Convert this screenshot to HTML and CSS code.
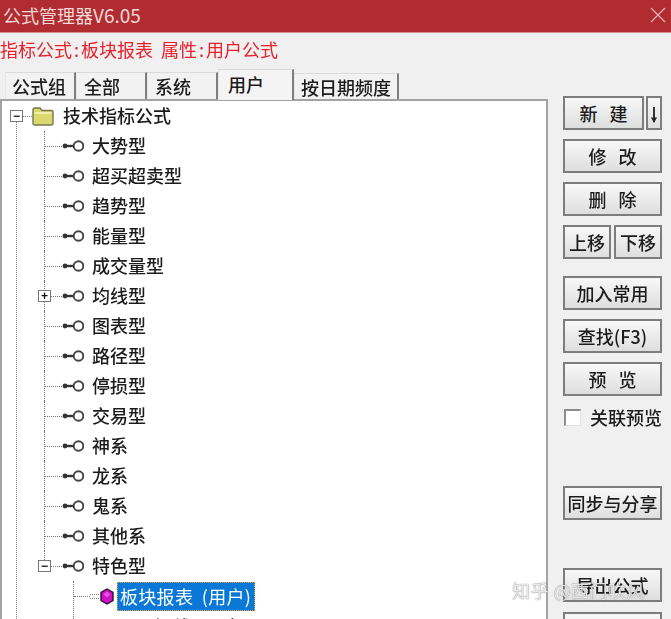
FILE: index.html
```html
<!DOCTYPE html>
<html lang="zh-CN">
<head>
<meta charset="utf-8">
<title>公式管理器V6.05</title>
<link rel="stylesheet" href="styles.css">
</head>
<body>
<svg class="defs" width="0" height="0" aria-hidden="true">
  <defs>
    <g id="key">
      <circle cx="3" cy="6" r="2.4" fill="#333"/>
      <path d="M3 6H12" stroke="#333" stroke-width="2.4" fill="none"/>
      <circle cx="16.5" cy="6" r="4.8" stroke="#444" stroke-width="1.9" fill="#fff"/>
    </g>
  </defs>
</svg>
<div class="window">
  <header class="titlebar">
    <span class="title">公式管理器<span class="ver">V6.05</span></span>
    <svg class="close" width="16" height="16" viewBox="0 0 16 16"><path d="M1 1L15 15M15 1L1 15" stroke="#e9b4b4" stroke-width="1.2" fill="none"/></svg>
  </header>
  <div class="info">指标公式<span class="colon">:</span>板块报表&nbsp; 属性<span class="colon">:</span>用户公式</div>
  <div class="main">
    <section class="left">
      <nav class="tabs">
        <span class="tab tab-a">公式组</span>
        <span class="tab tab-b">全部</span>
        <span class="tab tab-c">系统</span>
        <span class="tab tab-active">用户</span>
        <span class="tab tab-d">按日期频度</span>
      </nav>
      <div class="tree">
        <div class="root-row">
          <span class="box">−</span>
          <span class="dash dash-root"></span>
          <svg class="folder" width="22" height="19" viewBox="0 0 22 19">
            <path d="M1 3Q1 1 3 1H8L10 3.5H19.5Q21 3.5 21 5V16Q21 18 19 18H3Q1 18 1 16Z" fill="#dcd870" stroke="#77754a" stroke-width="1.4"/>
            <path d="M2.5 6H19.5" stroke="#f8f5b8" stroke-width="1.6"/>
          </svg>
          <span class="label root-label">技术指标公式</span>
        </div>
        <div class="guide-outer">
          <ul class="branches">
            <li class="node"><div class="row"><span class="dash"></span><svg class="key" width="22" height="12" viewBox="0 0 22 12"><use href="#key"/></svg><span class="label">大势型</span></div></li>
            <li class="node"><div class="row"><span class="dash"></span><svg class="key" width="22" height="12" viewBox="0 0 22 12"><use href="#key"/></svg><span class="label">超买超卖型</span></div></li>
            <li class="node"><div class="row"><span class="dash"></span><svg class="key" width="22" height="12" viewBox="0 0 22 12"><use href="#key"/></svg><span class="label">趋势型</span></div></li>
            <li class="node"><div class="row"><span class="dash"></span><svg class="key" width="22" height="12" viewBox="0 0 22 12"><use href="#key"/></svg><span class="label">能量型</span></div></li>
            <li class="node"><div class="row"><span class="dash"></span><svg class="key" width="22" height="12" viewBox="0 0 22 12"><use href="#key"/></svg><span class="label">成交量型</span></div></li>
            <li class="node"><div class="row"><span class="box box-over">+</span><span class="dash"></span><svg class="key" width="22" height="12" viewBox="0 0 22 12"><use href="#key"/></svg><span class="label">均线型</span></div></li>
            <li class="node"><div class="row"><span class="dash"></span><svg class="key" width="22" height="12" viewBox="0 0 22 12"><use href="#key"/></svg><span class="label">图表型</span></div></li>
            <li class="node"><div class="row"><span class="dash"></span><svg class="key" width="22" height="12" viewBox="0 0 22 12"><use href="#key"/></svg><span class="label">路径型</span></div></li>
            <li class="node"><div class="row"><span class="dash"></span><svg class="key" width="22" height="12" viewBox="0 0 22 12"><use href="#key"/></svg><span class="label">停损型</span></div></li>
            <li class="node"><div class="row"><span class="dash"></span><svg class="key" width="22" height="12" viewBox="0 0 22 12"><use href="#key"/></svg><span class="label">交易型</span></div></li>
            <li class="node"><div class="row"><span class="dash"></span><svg class="key" width="22" height="12" viewBox="0 0 22 12"><use href="#key"/></svg><span class="label">神系</span></div></li>
            <li class="node"><div class="row"><span class="dash"></span><svg class="key" width="22" height="12" viewBox="0 0 22 12"><use href="#key"/></svg><span class="label">龙系</span></div></li>
            <li class="node"><div class="row"><span class="dash"></span><svg class="key" width="22" height="12" viewBox="0 0 22 12"><use href="#key"/></svg><span class="label">鬼系</span></div></li>
            <li class="node"><div class="row"><span class="dash"></span><svg class="key" width="22" height="12" viewBox="0 0 22 12"><use href="#key"/></svg><span class="label">其他系</span></div></li>
            <li class="node node-last">
              <div class="row"><span class="box box-over">−</span><span class="dash"></span><svg class="key" width="22" height="12" viewBox="0 0 22 12"><use href="#key"/></svg><span class="label">特色型</span></div>
              <ul class="leaves">
                <li class="leaf">
                  <span class="dash dash-leaf"></span>
                  <span class="stub"></span>
                  <svg class="gem" width="14" height="17" viewBox="0 0 14 17"><path d="M7 1L13 4.5V12.5L7 16L1 12.5V4.5Z" fill="#cc10c4" stroke="#2a1030" stroke-width="1.4"/><path d="M7 3.5L10.5 6.5L7 9.5L3.5 6.5Z" fill="#ee50e4"/></svg>
                  <span class="selected">板块报表&nbsp;&nbsp;(用户)</span>
                </li>
                <li class="leaf leaf-next"><span class="label label-next">短线&nbsp;&nbsp;(用户)</span></li>
              </ul>
            </li>
          </ul>
        </div>
      </div>
    </section>
    <aside class="actions">
      <div class="btn-pair">
        <button class="btn btn-grow wide-text">新 建</button>
        <button class="btn btn-arrow"><svg class="arrow" width="8" height="18" viewBox="0 0 8 18"><path d="M4 1V16" stroke="#222" stroke-width="1.8" fill="none"/><path d="M1 11.5L4 17L7 11.5" fill="#222"/></svg></button>
      </div>
      <button class="btn wide-text">修 改</button>
      <button class="btn wide-text">删 除</button>
      <div class="btn-pair btn-pair-move">
        <button class="btn btn-half">上移</button>
        <button class="btn btn-half">下移</button>
      </div>
      <button class="btn">加入常用</button>
      <button class="btn">查找(F3)</button>
      <button class="btn wide-text">预 览</button>
      <label class="check"><span class="checkbox"></span><span>关联预览</span></label>
      <button class="btn btn-share">同步与分享</button>
      <button class="btn btn-export">导出公式</button>
      <button class="btn"></button>
    </aside>
  </div>
  <div class="watermark">知乎 @西门吹风</div>
</div>
</body>
</html>
```

FILE: styles.css
```css
* { box-sizing: border-box; }
html, body { margin: 0; padding: 0; }
body {
  width: 671px;
  height: 619px;
  overflow: hidden;
  background: #f0f0f0;
  font-family: "Noto Sans CJK SC", "Noto Sans", sans-serif;
  color: #1c1c1c;
}
.defs { position: absolute; }
.window {
  position: relative;
  width: 671px;
  height: 619px;
  overflow: hidden;
  filter: blur(0.35px);
}

.titlebar {
  height: 33px;
  background: #b02c30;
  border-bottom: 1px solid #d88f90;
  display: flex;
  align-items: center;
  justify-content: space-between;
  padding: 0 5px 2px 3px;
}
.title { color: #f2d9d9; font-size: 18px; line-height: 30px; }
.ver { font-size: 19px; }

.info {
  height: 36px;
  padding-left: 0;
  color: #e8202c;
  font-size: 18px;
  line-height: 32px;
  white-space: nowrap;
}
.colon { margin: 0 2px; }

.main { display: flex; height: 550px; }
.left { width: 548px; flex: none; }

.tabs {
  height: 30px;
  display: flex;
  align-items: flex-end;
  padding-left: 5px;
  font-weight: 500;
}
.tab {
  height: 27px;
  background: #f2f2f2;
  border-top: 1px solid #dcdcdc;
  border-left: 1px solid #e8e8e8;
  border-right: 2px solid #7e7e7e;
  font-size: 18px;
  line-height: 26px;
  white-space: nowrap;
}
.tab-a { width: 71px; padding-left: 6px; }
.tab-b { width: 71px; padding-left: 7px; }
.tab-c { width: 71px; padding-left: 7px; }
.tab-active {
  width: 76px;
  height: 31px;
  padding-left: 9px;
  line-height: 28px;
  background: #f4f4f4;
  margin-bottom: -1px;
  position: relative;
  z-index: 1;
}
.tab-d { width: 105px; padding-left: 6px; height: 26px; line-height: 26px; }

.tree {
  height: 520px;
  background: #fff;
  border: 2px solid #a3a3a3;
  border-bottom: 0;
  overflow: hidden;
  font-size: 18px;
}
.root-row {
  height: 30px;
  display: flex;
  align-items: center;
  padding-left: 8px;
}
.label { line-height: 30px; margin-top: -2px; font-weight: 500; white-space: nowrap; }
.root-label { margin-left: 9px; }
.label-next { margin-top: 0; }

.box {
  flex: none;
  width: 13px;
  height: 12px;
  background: #fff;
  border: 1px solid #777;
  font-size: 12px;
  line-height: 10px;
  text-align: center;
  color: #111;
  font-family: "Liberation Sans", sans-serif;
  font-weight: 700;
}
.dash { flex: none; border-bottom: 1px dotted #777; }
.dash-root { width: 9px; }
.folder { flex: none; }

.guide-outer {
  margin: -9px 0 0 14px;
  padding-top: 9px;
  border-left: 1px dotted #777;
}
ul { list-style: none; margin: 0; padding: 0; }
.branches { margin-left: 27px; }
.node { border-left: 1px dotted #777; }
.node-last { border-left: 1px solid transparent; }
.row {
  position: relative;
  height: 30px;
  display: flex;
  align-items: center;
}
.row .dash { width: 17px; }
.key { flex: none; margin-right: 8px; }
.box-over { position: absolute; left: -7px; top: 9px; }
.node-last > .row::before {
  content: "";
  position: absolute;
  left: -1px;
  top: 0;
  height: 9px;
  border-left: 1px dotted #777;
}

.leaves { margin-left: 28px; border-left: 1px dotted #777; }
.leaf { height: 30px; display: flex; align-items: center; }
.dash-leaf { width: 16px; }
.stub { width: 9px; height: 5px; flex: none; border-top: 1px dotted #888; border-bottom: 1px dotted #888; }
.gem { flex: none; margin-left: 1px; }
.selected {
  margin-left: 3px;
  height: 29px;
  padding: 0 3px 0 2px;
  line-height: 26px;
  letter-spacing: 0.3px;
  white-space: nowrap;
  background: #0a78d7;
  color: #fff;
  border: 1px dotted #e8a040;
}
.leaf-next { padding-left: 81px; }

.actions {
  flex: none;
  width: 123px;
  padding: 27px 0 0 15px;
  display: flex;
  flex-direction: column;
}
.btn {
  display: block;
  width: 99px;
  height: 34px;
  flex: none;
  margin: 0 0 9px;
  padding: 0 0 1px;
  border: 2px solid #7d7d7d;
  background: linear-gradient(#f8f8f8, #dedede);
  font-family: inherit;
  font-size: 18px;
  font-weight: 500;
  line-height: 28px;
  color: #1c1c1c;
  white-space: nowrap;
}
.wide-text { word-spacing: 8px; }
.btn-pair { display: flex; justify-content: space-between; width: 99px; flex: none; }
.btn-pair-move { margin-bottom: 8px; }
.btn-grow { width: 81px; }
.btn-arrow { width: 16px; }
.arrow { display: block; margin: 5px auto 0; }
.btn-half { width: 48px; }

.check {
  height: 18px;
  margin: 3px 0 0 1px;
  display: flex;
  align-items: center;
  font-size: 18px;
  font-weight: 500;
  white-space: nowrap;
}
.checkbox {
  flex: none;
  width: 17px;
  height: 17px;
  margin-right: 9px;
  background: #fff;
  border: 2px solid #8d8d8d;
  border-right: 1px solid #e2e2e2;
  border-bottom: 1px solid #e2e2e2;
}
.btn-share { margin: 60px 0 0; }
.btn-export { margin: 48px 0 10px; }

.watermark {
  position: absolute;
  left: 512px;
  top: 576px;
  font-size: 18px;
  line-height: 28px;
  white-space: nowrap;
  color: rgba(255, 255, 255, 0.85);
  text-shadow: 0 0 1px rgba(60, 60, 60, 0.9);
  letter-spacing: 0.5px;
}
```
